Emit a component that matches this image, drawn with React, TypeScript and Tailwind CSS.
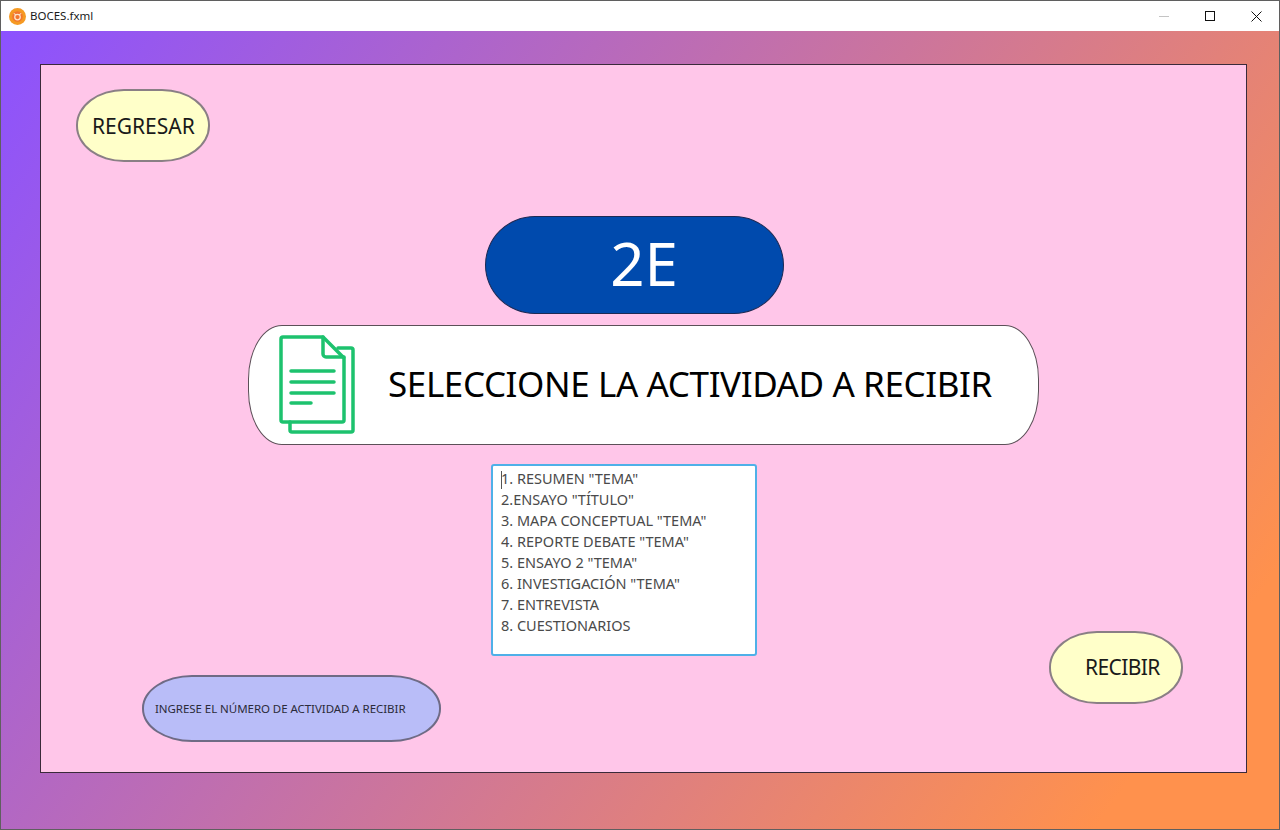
const activities = [
  '1. RESUMEN "TEMA"',
  '2.ENSAYO "TÍTULO"',
  '3. MAPA CONCEPTUAL "TEMA"',
  '4. REPORTE DEBATE "TEMA"',
  '5. ENSAYO 2 "TEMA"',
  '6. INVESTIGACIÓN "TEMA"',
  "7. ENTREVISTA",
  "8. CUESTIONARIOS",
];

function AppIcon() {
  return (
    <svg width="17" height="17" viewBox="0 0 16 16" className="shrink-0">
      <circle cx="8" cy="8" r="8" fill="#f59a23" />
      <circle cx="8" cy="8" r="5" fill="#f2762e" />
      <circle cx="8" cy="8.5" r="2.6" fill="none" stroke="#fde3c8" strokeWidth="1.2" />
      <path d="M4.5 5l2 1.5M11.5 5l-2 1.5" stroke="#fde3c8" strokeWidth="1" />
    </svg>
  );
}

function DocumentIcon() {
  return (
    <svg width="78" height="100" viewBox="0 0 78 100" fill="none" stroke="#1dc26e" strokeWidth="3.5" strokeLinecap="round" strokeLinejoin="round">
      <path d="M5 3h40l21 21v62a2 2 0 0 1-2 2H5a2 2 0 0 1-2-2V5a2 2 0 0 1 2-2z" />
      <path d="M45 3v17a3 3 0 0 0 3 3h18" />
      <path d="M60 14h13a2 2 0 0 1 2 2v80a2 2 0 0 1-2 2H14a2 2 0 0 1-2-2v-8" />
      <path d="M13 37h43M13 48h43M13 59h43M13 69h20" />
    </svg>
  );
}

export default function App() {
  return (
    <div className="w-[1280px] h-[830px] overflow-hidden flex flex-col border border-[#5f5f5f] font-['Noto_Sans',sans-serif]">
      {/* Title bar */}
      <div className="h-[30px] shrink-0 bg-white flex items-center pl-[8px]">
        <AppIcon />
        <span className="ml-[4px] text-[11.5px] text-[#1a1a1a]">BOCES.fxml</span>
        <div className="ml-auto flex items-center">
          <div className="w-[46px] flex justify-center">
            <div className="w-[10px] h-px bg-[#c4c4c4]" />
          </div>
          <div className="w-[46px] flex justify-center">
            <div className="w-[10px] h-[10px] border border-[#111]" />
          </div>
          <div className="w-[46px] flex justify-center">
            <svg width="11" height="11" viewBox="0 0 11 11" stroke="#111" strokeWidth="1">
              <path d="M.5.5l10 10M10.5.5l-10 10" />
            </svg>
          </div>
        </div>
      </div>

      {/* Gradient background */}
      <div className="flex-1 pt-[33px] pl-[39px] bg-[linear-gradient(125deg,#8c52ff_0%,#ff914d_90%)]">
        <div className="w-[1207px] h-[709px] bg-[#ffc6e9] border border-[#3a2a3a] flex flex-col">
          <div className="mt-[24px] ml-[35px] w-[134px] h-[73px] rounded-[48px/36px] bg-[#ffffc9] border-2 border-[#8a7f85] flex items-center pl-[14px] pt-[2px] text-[21px] text-[#1a1a1a]">
            REGRESAR
          </div>

          <div className="mt-[54px] ml-[444px] w-[299px] h-[98px] rounded-[50px/49px] bg-[#004aad] border border-[#1d2a55] flex items-center justify-center pl-[19px] pb-[4px] text-[60px] text-white">
            2E
          </div>

          <div className="mt-[11px] ml-[207px] w-[791px] h-[120px] rounded-[34px/54px] bg-white border border-[#5c5058] flex items-center pl-[29px] pb-[2px]">
            <DocumentIcon />
            <span className="ml-[32px] text-[35px] tracking-[-0.4px] text-black whitespace-nowrap">
              SELECCIONE LA ACTIVIDAD A RECIBIR
            </span>
          </div>

          <div className="mt-[19px] flex items-start">
            <div className="mt-[211px] ml-[101px] w-[299px] h-[67px] rounded-[50px/33px] bg-[#b9bdf8] border-2 border-[#6f6b85] flex items-center pl-[11px] text-[11.5px] tracking-[-0.05px] text-[#2b2b3a] whitespace-nowrap">
              INGRESE EL NÚMERO DE ACTIVIDAD A RECIBIR
            </div>

            <div className="relative ml-[50px] w-[266px] h-[192px] bg-white border-2 border-[#4fb0e8] rounded-[3px] pl-[8px] pt-[2px] text-[14.5px] leading-[21px] text-[#4a4a4a]">
              <div className="absolute left-[8px] top-[5px] w-px h-[18px] bg-[#555]" />
              {activities.map((item) => (
                <div key={item} className="whitespace-nowrap">
                  {item}
                </div>
              ))}
            </div>

            <div className="mt-[167px] ml-[292px] w-[134px] h-[73px] rounded-[48px/36px] bg-[#ffffc9] border-2 border-[#8a7f85] flex items-center pl-[34px] text-[21px] tracking-[-0.6px] text-[#1a1a1a]">
              RECIBIR
            </div>
          </div>
        </div>
      </div>
    </div>
  );
}
